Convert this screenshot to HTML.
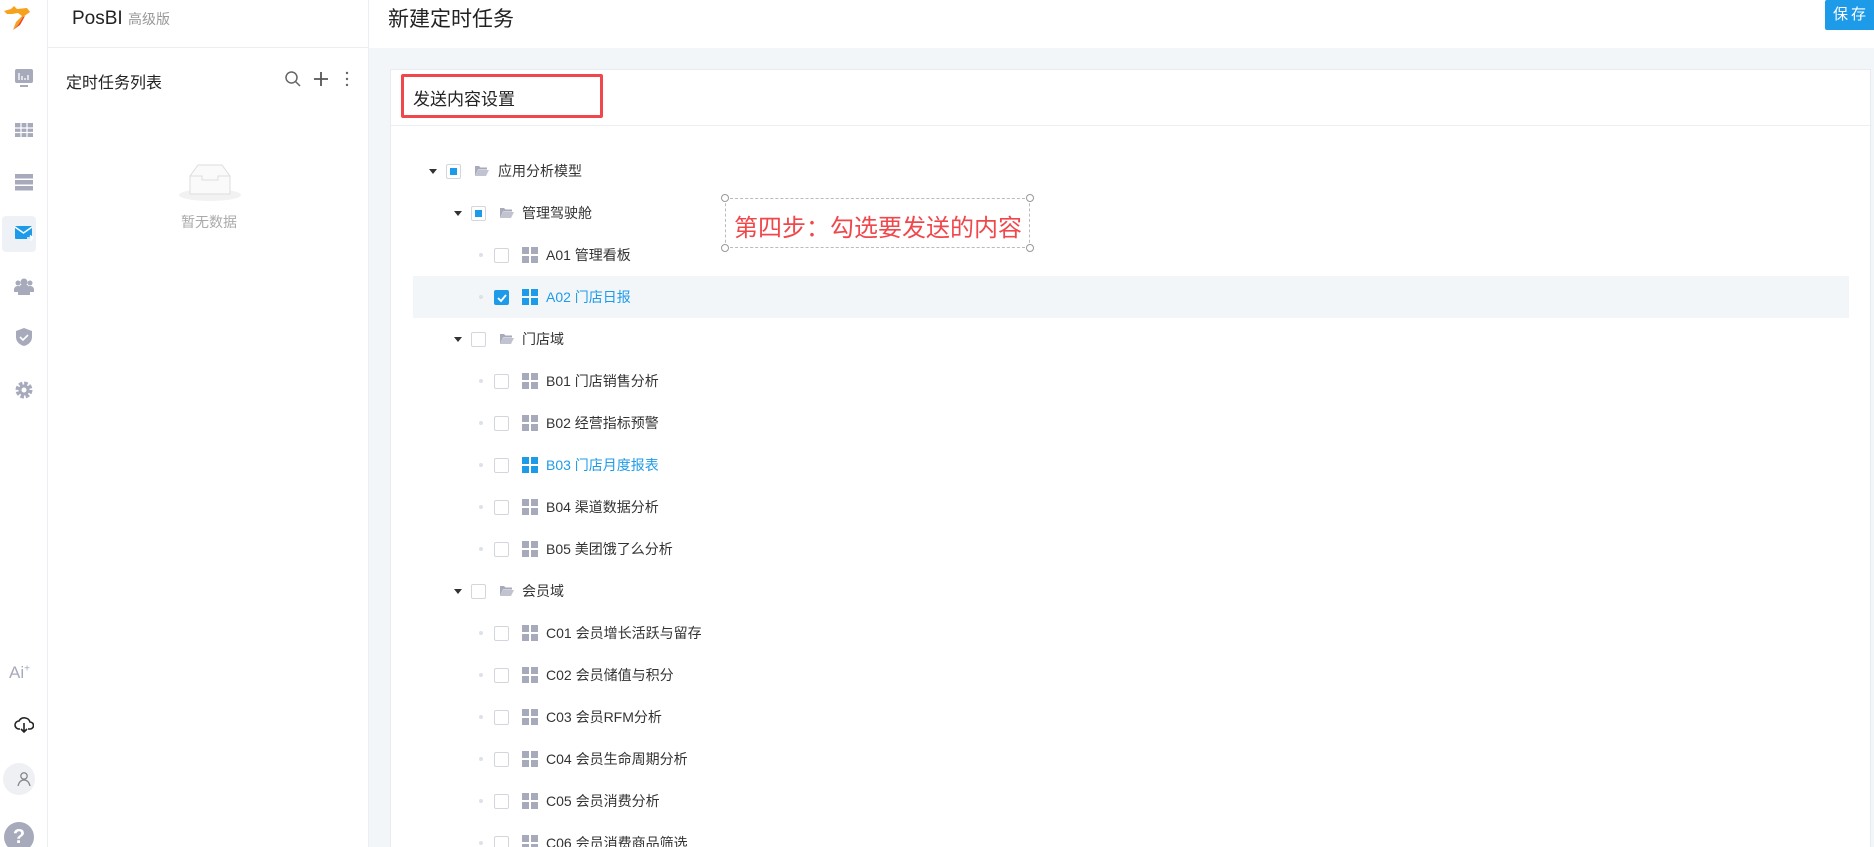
<!DOCTYPE html>
<html><head><meta charset="utf-8"><style>
*{margin:0;padding:0;box-sizing:border-box}
html{overflow:hidden;width:1874px;height:847px}
body{width:1874px;height:847px;overflow:hidden;background:#fff;font-family:"Liberation Sans","Noto Sans CJK SC",sans-serif;position:relative;color:#333}
.a{position:absolute}
.side{left:0;top:0;width:48px;height:847px;border-right:1px solid #eceef2;background:#fff}
.ic{position:absolute;left:14px;width:20px;height:20px}
.p2{left:48px;top:0;width:321px;height:847px;border-right:1px solid #eceef2}
.main{left:369px;top:48px;width:1505px;height:799px;background:#f3f6f9}
.card{left:390px;top:69px;width:1481px;height:778px;background:#fff;border:1px solid #e8ebef;border-bottom:none}
.row{position:absolute;left:0;width:1874px;height:42px}
.row span{position:absolute;top:0;line-height:42px;font-size:14px;color:#333;white-space:nowrap}
.cb{position:absolute;top:14px;width:15px;height:15px;border:1px solid #d3d6dc;border-radius:2px;background:#fff}
.cb.p::after{content:"";position:absolute;left:3px;top:3px;width:7px;height:7px;background:#1e9be8}
.cb.c{background:#1e9be8;border-color:#1e9be8}
.arr{position:absolute;top:19px;width:0;height:0;border-left:4px solid transparent;border-right:4px solid transparent;border-top:5px solid #333}
.dot{position:absolute;top:19px;width:4px;height:4px;border-radius:2px;background:#dde1e8}
.grid{position:absolute;top:13px;width:16px;height:16px}
.grid i{position:absolute;width:7px;height:7px;background:#a7aabb}
.blue .grid i{background:#1e9be8}
.blue span{color:#1e9be8!important}
</style></head><body>
<div class="a side">
 <svg class="a" style="left:2px;top:3px" width="30" height="30" viewBox="0 0 30 30"><path d="M2 8 L9 6 L12 3 L15 6 L25 5 L28 9 L21 14 L16 22 L11 27 L14 19 L20 13 L16 10 L10 11 L5 11 Z" fill="#f6a21d"/><path d="M11 27 L16 22 L21 14 L23 13 L18 22 Z" fill="#e8412b"/></svg>
 <svg class="ic" style="top:68px" viewBox="0 0 20 20"><rect x="1" y="1" width="18" height="14" rx="2" fill="#a7aabb"/><rect x="6" y="17" width="8" height="2" fill="#a7aabb"/><path d="M5 5v7M8 8v4M11 10v2M14 7v5" stroke="#fff" stroke-width="1.3"/></svg>
 <svg class="ic" style="top:120px" viewBox="0 0 20 20"><rect x="1" y="3" width="18" height="14" fill="#a7aabb"/><path d="M1 8h18M1 12.5h18M7 3v14M13 3v14" stroke="#fff" stroke-width="1.2"/></svg>
 <svg class="ic" style="top:172px" viewBox="0 0 20 20"><rect x="1" y="2" width="18" height="4.5" fill="#a7aabb"/><rect x="1" y="8" width="18" height="4.5" fill="#a7aabb"/><rect x="1" y="14" width="18" height="4.5" fill="#a7aabb"/></svg>
 <div class="a" style="left:2px;top:216px;width:34px;height:36px;background:#eef1f5;border-radius:4px"></div>
 <svg class="ic" style="top:223px" viewBox="0 0 20 20"><rect x="1" y="3" width="17" height="13" rx="1" fill="#1e9be8"/><path d="M1 4l8.5 6L18 4" stroke="#fff" stroke-width="1.5" fill="none"/><path d="M13 15h5M16 12.5l2.5 2.5-2.5 2.5" stroke="#fff" stroke-width="1.6" fill="none"/></svg>
 <svg class="ic" style="top:276px" viewBox="0 0 20 20"><circle cx="10" cy="6" r="3.5" fill="#a7aabb"/><circle cx="4" cy="7" r="2.5" fill="#a7aabb"/><circle cx="16" cy="7" r="2.5" fill="#a7aabb"/><path d="M4 19v-5a6 6 0 0112 0v5z" fill="#a7aabb"/><path d="M0 16v-3a4 4 0 014-3h1v6zM20 16v-3a4 4 0 00-4-3h-1v6z" fill="#a7aabb"/></svg>
 <svg class="ic" style="top:327px" viewBox="0 0 20 20"><path d="M10 1l8 3v6c0 5-4 8-8 9-4-1-8-4-8-9V4z" fill="#a7aabb"/><path d="M6 10l3 3 5-5" stroke="#fff" stroke-width="1.6" fill="none"/></svg>
 <svg class="ic" style="top:380px" viewBox="0 0 20 20"><circle cx="10" cy="10" r="6.5" fill="none" stroke="#a7aabb" stroke-width="4" stroke-dasharray="3.4 1.7"/><circle cx="10" cy="10" r="5.5" fill="#a7aabb"/><circle cx="10" cy="10" r="2.5" fill="#fff"/></svg>
 <div class="a" style="left:9px;top:663px;font-size:17px;color:#a7aabb">Ai<sup style="font-size:10px">+</sup></div>
 <svg class="ic" style="top:714px" viewBox="0 0 20 20"><path d="M6 15H5a4 4 0 010-8 6 6 0 0111 1 3.5 3.5 0 010 7h-2" fill="none" stroke="#222" stroke-width="1.6"/><path d="M10 9v9M7 15l3 3 3-3" fill="none" stroke="#222" stroke-width="1.6"/></svg>
 <div class="a" style="left:3px;top:763px;width:32px;height:32px;border-radius:16px;background:#eef0f4"></div>
 <svg class="ic" style="top:769px" viewBox="0 0 20 20"><circle cx="10" cy="7" r="3.2" fill="none" stroke="#888" stroke-width="1.3"/><path d="M4 17c1-4 3-6 6-6s5 2 6 6" fill="none" stroke="#888" stroke-width="1.3"/></svg>
 <div class="a" style="left:4px;top:822px;width:30px;height:30px;border-radius:15px;background:#a7aabb;color:#fff;font-weight:bold;font-size:20px;text-align:center;line-height:30px">?</div>
</div>
<div class="a p2">
 <div class="a" style="left:0;top:0;width:321px;height:48px;border-bottom:1px solid #eceef2"></div>
 <div class="a" style="left:24px;top:8px;font-size:19px;color:#222">PosBI <span style="font-size:14px;color:#999">高级版</span></div>
 <div class="a" style="left:18px;top:69px;font-size:16px;color:#222">定时任务列表</div>
 <svg class="a" style="left:236px;top:70px" width="18" height="18" viewBox="0 0 18 18"><circle cx="7.5" cy="7.5" r="5.5" fill="none" stroke="#666" stroke-width="1.5"/><path d="M11.5 11.5L16 16" stroke="#666" stroke-width="1.5"/></svg>
 <svg class="a" style="left:264px;top:70px" width="18" height="18" viewBox="0 0 18 18"><path d="M9 2v14M2 9h14" stroke="#555" stroke-width="1.8"/></svg>
 <svg class="a" style="left:296px;top:70px" width="6" height="18" viewBox="0 0 6 18"><circle cx="3" cy="3" r="1.2" fill="#666"/><circle cx="3" cy="9" r="1.2" fill="#666"/><circle cx="3" cy="15" r="1.2" fill="#666"/></svg>
 <svg class="a" style="left:130px;top:160px" width="64" height="42" viewBox="0 0 64 42"><ellipse cx="32" cy="35" rx="31" ry="6" fill="#f2f2f2"/><path d="M12 16L20 5h24l8 11v18H12z" fill="#fafafa" stroke="#ddd"/><path d="M12 16h12v4h16v-4h12" fill="none" stroke="#ddd"/></svg>
 <div class="a" style="left:133px;top:212px;font-size:14px;color:#aaa">暂无数据</div>
</div>
<div class="a" style="left:388px;top:3px;font-size:21px;color:#222">新建定时任务</div>
<div class="a" style="left:1825px;top:0;width:49px;height:30px;background:#1e9be8;color:#fff;font-size:15px;line-height:30px;padding-left:8px;letter-spacing:3px;border-radius:2px 0 0 2px">保存</div>
<div class="a main"></div>
<div class="a card"><div class="a" style="left:0;top:55px;width:1481px;border-top:1px solid #eceef2"></div></div>
<div class="a" style="left:401px;top:74px;width:202px;height:44px;border:3px solid #f0474c;border-radius:2px"></div>
<div class="a" style="left:413px;top:85px;font-size:17px;color:#222">发送内容设置</div>
<div class="a" style="left:413px;top:276px;width:1436px;height:42px;background:#f3f6f9"></div>

<div class="row" style="top:150px"><i class="arr" style="left:429px"></i><i class="cb p" style="left:446px"></i><svg class="a" style="left:474px;top:15px" width="15" height="12" viewBox="0 0 15 12"><path d="M1 1h4l1.5 1.5H13v2H4L1 11z" fill="#a7aabb"/><path d="M4 5h11l-3 6H1z" fill="#c1c4d0"/></svg><span style="left:498px">应用分析模型</span></div>
<div class="row" style="top:192px"><i class="arr" style="left:454px"></i><i class="cb p" style="left:471px"></i><svg class="a" style="left:499px;top:15px" width="15" height="12" viewBox="0 0 15 12"><path d="M1 1h4l1.5 1.5H13v2H4L1 11z" fill="#a7aabb"/><path d="M4 5h11l-3 6H1z" fill="#c1c4d0"/></svg><span style="left:522px">管理驾驶舱</span></div>
<div class="row" style="top:234px"><i class="dot" style="left:479px"></i><i class="cb" style="left:494px"></i><div class="grid" style="left:522px"><i style="left:0;top:0"></i><i style="left:9px;top:0"></i><i style="left:0;top:9px"></i><i style="left:9px;top:9px"></i></div><span style="left:546px">A01 管理看板</span></div>
<div class="row blue" style="top:276px"><i class="dot" style="left:479px"></i><i class="cb c" style="left:494px"><svg style="position:absolute;left:1px;top:1px" width="12" height="12" viewBox="0 0 12 12"><path d="M2 6l3 3 5-6" stroke="#fff" stroke-width="1.8" fill="none"/></svg></i><div class="grid" style="left:522px"><i style="left:0;top:0"></i><i style="left:9px;top:0"></i><i style="left:0;top:9px"></i><i style="left:9px;top:9px"></i></div><span style="left:546px">A02 门店日报</span></div>
<div class="row" style="top:318px"><i class="arr" style="left:454px"></i><i class="cb" style="left:471px"></i><svg class="a" style="left:499px;top:15px" width="15" height="12" viewBox="0 0 15 12"><path d="M1 1h4l1.5 1.5H13v2H4L1 11z" fill="#a7aabb"/><path d="M4 5h11l-3 6H1z" fill="#c1c4d0"/></svg><span style="left:522px">门店域</span></div>
<div class="row" style="top:360px"><i class="dot" style="left:479px"></i><i class="cb" style="left:494px"></i><div class="grid" style="left:522px"><i style="left:0;top:0"></i><i style="left:9px;top:0"></i><i style="left:0;top:9px"></i><i style="left:9px;top:9px"></i></div><span style="left:546px">B01 门店销售分析</span></div>
<div class="row" style="top:402px"><i class="dot" style="left:479px"></i><i class="cb" style="left:494px"></i><div class="grid" style="left:522px"><i style="left:0;top:0"></i><i style="left:9px;top:0"></i><i style="left:0;top:9px"></i><i style="left:9px;top:9px"></i></div><span style="left:546px">B02 经营指标预警</span></div>
<div class="row blue" style="top:444px"><i class="dot" style="left:479px"></i><i class="cb" style="left:494px"></i><div class="grid" style="left:522px"><i style="left:0;top:0"></i><i style="left:9px;top:0"></i><i style="left:0;top:9px"></i><i style="left:9px;top:9px"></i></div><span style="left:546px">B03 门店月度报表</span></div>
<div class="row" style="top:486px"><i class="dot" style="left:479px"></i><i class="cb" style="left:494px"></i><div class="grid" style="left:522px"><i style="left:0;top:0"></i><i style="left:9px;top:0"></i><i style="left:0;top:9px"></i><i style="left:9px;top:9px"></i></div><span style="left:546px">B04 渠道数据分析</span></div>
<div class="row" style="top:528px"><i class="dot" style="left:479px"></i><i class="cb" style="left:494px"></i><div class="grid" style="left:522px"><i style="left:0;top:0"></i><i style="left:9px;top:0"></i><i style="left:0;top:9px"></i><i style="left:9px;top:9px"></i></div><span style="left:546px">B05 美团饿了么分析</span></div>
<div class="row" style="top:570px"><i class="arr" style="left:454px"></i><i class="cb" style="left:471px"></i><svg class="a" style="left:499px;top:15px" width="15" height="12" viewBox="0 0 15 12"><path d="M1 1h4l1.5 1.5H13v2H4L1 11z" fill="#a7aabb"/><path d="M4 5h11l-3 6H1z" fill="#c1c4d0"/></svg><span style="left:522px">会员域</span></div>
<div class="row" style="top:612px"><i class="dot" style="left:479px"></i><i class="cb" style="left:494px"></i><div class="grid" style="left:522px"><i style="left:0;top:0"></i><i style="left:9px;top:0"></i><i style="left:0;top:9px"></i><i style="left:9px;top:9px"></i></div><span style="left:546px">C01 会员增长活跃与留存</span></div>
<div class="row" style="top:654px"><i class="dot" style="left:479px"></i><i class="cb" style="left:494px"></i><div class="grid" style="left:522px"><i style="left:0;top:0"></i><i style="left:9px;top:0"></i><i style="left:0;top:9px"></i><i style="left:9px;top:9px"></i></div><span style="left:546px">C02 会员储值与积分</span></div>
<div class="row" style="top:696px"><i class="dot" style="left:479px"></i><i class="cb" style="left:494px"></i><div class="grid" style="left:522px"><i style="left:0;top:0"></i><i style="left:9px;top:0"></i><i style="left:0;top:9px"></i><i style="left:9px;top:9px"></i></div><span style="left:546px">C03 会员RFM分析</span></div>
<div class="row" style="top:738px"><i class="dot" style="left:479px"></i><i class="cb" style="left:494px"></i><div class="grid" style="left:522px"><i style="left:0;top:0"></i><i style="left:9px;top:0"></i><i style="left:0;top:9px"></i><i style="left:9px;top:9px"></i></div><span style="left:546px">C04 会员生命周期分析</span></div>
<div class="row" style="top:780px"><i class="dot" style="left:479px"></i><i class="cb" style="left:494px"></i><div class="grid" style="left:522px"><i style="left:0;top:0"></i><i style="left:9px;top:0"></i><i style="left:0;top:9px"></i><i style="left:9px;top:9px"></i></div><span style="left:546px">C05 会员消费分析</span></div>
<div class="row" style="top:822px"><i class="dot" style="left:479px"></i><i class="cb" style="left:494px"></i><div class="grid" style="left:522px"><i style="left:0;top:0"></i><i style="left:9px;top:0"></i><i style="left:0;top:9px"></i><i style="left:9px;top:9px"></i></div><span style="left:546px">C06 会员消费商品筛选</span></div>

<div class="a" style="left:725px;top:198px;width:305px;height:50px;border:1.5px dashed #bbb"></div>
<div class="a" style="left:721px;top:194px;width:8px;height:8px;border:1px solid #999;border-radius:4px;background:#fff"></div>
<div class="a" style="left:1026px;top:194px;width:8px;height:8px;border:1px solid #999;border-radius:4px;background:#fff"></div>
<div class="a" style="left:721px;top:244px;width:8px;height:8px;border:1px solid #999;border-radius:4px;background:#fff"></div>
<div class="a" style="left:1026px;top:244px;width:8px;height:8px;border:1px solid #999;border-radius:4px;background:#fff"></div>
<div class="a" style="left:734px;top:208px;font-size:24px;color:#f0474c;white-space:nowrap">第四步：勾选要发送的内容</div>
</body></html>
